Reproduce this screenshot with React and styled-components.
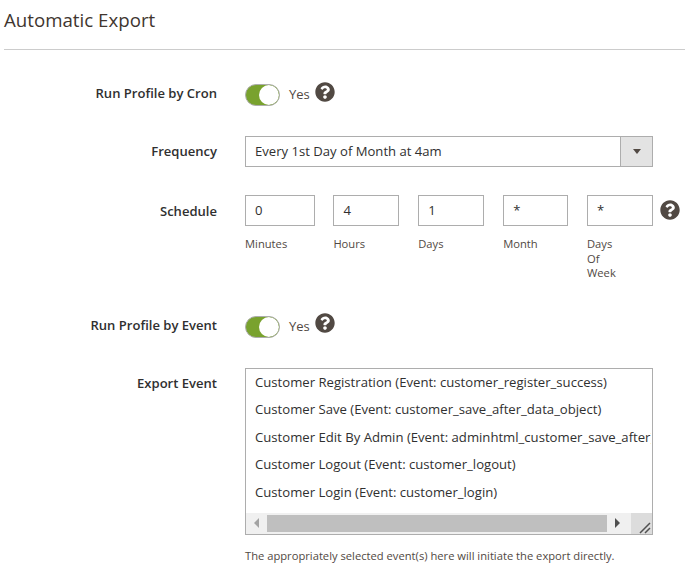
import React from "react";
import styled, { createGlobalStyle } from "styled-components";
import { FaQuestionCircle } from "react-icons/fa";

const GlobalStyle = createGlobalStyle`
  html, body {
    margin: 0;
    padding: 0;
    background: #fff;
    overflow: hidden;
  }
  body {
    font-family: "Open Sans", "Liberation Sans", sans-serif;
    color: #303030;
    font-size: 13px;
  }
`;

const Page = styled.div`
  width: 685px;
  height: 574px;
  padding-left: 4px;
  box-sizing: border-box;
  overflow: hidden;
`;

const Title = styled.h2`
  margin: 0;
  height: 50px;
  padding-top: 7px;
  box-sizing: border-box;
  font-size: 18.7px;
  line-height: 25px;
  font-weight: 400;
  color: #41362f;
  border-bottom: 1px solid #cccccc;
`;

const Form = styled.div`
  display: flex;
  flex-direction: column;
  padding-top: 34px;
`;

const Row = styled.div`
  display: grid;
  grid-template-columns: 213px 1fr;
  column-gap: 28px;
  margin-bottom: ${(p) => p.$gap || 0}px;
`;

const Label = styled.div`
  text-align: right;
  font-weight: 600;
  font-size: 13.05px;
  line-height: 18px;
  padding-top: ${(p) => p.$top || 0}px;
  color: #303030;
`;

const Control = styled.div`
  display: flex;
  align-items: ${(p) => p.$align || "center"};
  min-width: 0;
`;

const Toggle = styled.div`
  position: relative;
  width: 35px;
  height: 22px;
  border-radius: 11px;
  background: #79a22e;
  border: 1px solid #adadad;
  box-sizing: border-box;
  overflow: hidden;
`;

const Knob = styled.span`
  position: absolute;
  top: 0;
  right: 0;
  width: 20px;
  height: 20px;
  border-radius: 50%;
  background: #fff;
`;

const ToggleText = styled.span`
  margin-left: 9px;
  margin-top: -2px;
  font-size: 13px;
  line-height: 18px;
  color: #514943;
`;

const Help = styled(FaQuestionCircle)`
  width: 20px;
  height: 20px;
  color: #514943;
  flex: none;
  margin-left: ${(p) => p.$left}px;
  margin-top: ${(p) => p.$top || 0}px;
`;

const Select = styled.div`
  width: 408px;
  height: 31px;
  box-sizing: border-box;
  border: 1px solid #adadad;
  display: flex;
  align-items: center;
  justify-content: space-between;
  padding-left: 9px;
`;

const SelectValue = styled.span`
  margin-top: -2px;
  font-size: 13.1px;
  color: #303030;
`;

const SelectButton = styled.div`
  width: 31px;
  height: 29px;
  background: #e3e3e3;
  border-left: 1px solid #adadad;
  display: flex;
  align-items: center;
  justify-content: center;
`;

const Caret = styled.span`
  width: 0;
  height: 0;
  border-left: 4px solid transparent;
  border-right: 4px solid transparent;
  border-top: 5px solid #514943;
`;

const Fields = styled.div`
  display: flex;
  width: 408px;
  justify-content: space-between;
  flex: none;
`;

const Field = styled.div`
  width: ${(p) => p.$w}px;
  display: flex;
  flex-direction: column;
`;

const FieldBox = styled.div`
  height: 31px;
  box-sizing: border-box;
  border: 1px solid #adadad;
  padding-left: 9px;
  font-size: 13.1px;
  line-height: 29px;
  color: #303030;
`;

const FieldHint = styled.div`
  margin-top: 11px;
  max-width: 40px;
  font-size: 11.2px;
  line-height: 14.5px;
  color: #514943;
`;

const ListBox = styled.div`
  position: relative;
  width: 408px;
  height: 167px;
  box-sizing: border-box;
  border: 1px solid #adadad;
  overflow: hidden;
`;

const Options = styled.div`
  width: 405px;
  height: 144px;
  padding-top: 0.4px;
  box-sizing: border-box;
  overflow: hidden;
`;

const Option = styled.div`
  height: 27.5px;
  padding-left: 9px;
  font-size: 13.13px;
  line-height: 27.5px;
  white-space: nowrap;
  color: #303030;
`;

const ScrollBar = styled.div`
  position: absolute;
  left: 0;
  right: 0;
  bottom: 0;
  height: 21px;
  display: flex;
  background: #f0f0f0;
`;

const ScrollButton = styled.div`
  width: 21px;
  display: flex;
  align-items: center;
  justify-content: center;
  flex: none;
`;

const Arrow = styled.span`
  width: 0;
  height: 0;
  border-top: 5px solid transparent;
  border-bottom: 5px solid transparent;
  ${(p) =>
    p.$dir === "left"
      ? "border-right: 5px solid #a3a3a3;"
      : "border-left: 5px solid #505050;"}
`;

const Thumb = styled.div`
  width: 340px;
  height: 17px;
  margin-top: 2px;
  background: #bfbfbf;
  flex: none;
`;

const Corner = styled.div`
  margin-left: auto;
  width: 21px;
  background: #dcdcdc;
  display: flex;
  align-items: flex-end;
  justify-content: flex-end;
`;

const Note = styled.div`
  margin-top: 13px;
  font-size: 11.2px;
  line-height: 15px;
  white-space: nowrap;
  color: #514943;
`;

const options = [
  "Customer Registration (Event: customer_register_success)",
  "Customer Save (Event: customer_save_after_data_object)",
  "Customer Edit By Admin (Event: adminhtml_customer_save_after)",
  "Customer Logout (Event: customer_logout)",
  "Customer Login (Event: customer_login)",
];

const schedule = [
  { value: "0", hint: "Minutes", w: 69.5 },
  { value: "4", hint: "Hours", w: 66 },
  { value: "1", hint: "Days", w: 66 },
  { value: "*", hint: "Month", w: 65 },
  { value: "*", hint: "Days Of Week", w: 66 },
];

const Switch = () => (
  <>
    <Toggle>
      <Knob />
    </Toggle>
    <ToggleText>Yes</ToggleText>
    <Help $left={5} $top={-7} />
  </>
);

export default function App() {
  return (
    <Page>
      <GlobalStyle />
      <Title>Automatic Export</Title>
      <Form>
        <Row $gap={30}>
          <Label>Run Profile by Cron</Label>
          <Control>
            <Switch />
          </Control>
        </Row>
        <Row $gap={28}>
          <Label $top={6}>Frequency</Label>
          <Control>
            <Select>
              <SelectValue>Every 1st Day of Month at 4am</SelectValue>
              <SelectButton>
                <Caret />
              </SelectButton>
            </Select>
          </Control>
        </Row>
        <Row $gap={35}>
          <Label $top={7}>Schedule</Label>
          <Control $align="flex-start">
            <Fields>
              {schedule.map((f) => (
                <Field key={f.hint} $w={f.w}>
                  <FieldBox>{f.value}</FieldBox>
                  <FieldHint>{f.hint}</FieldHint>
                </Field>
              ))}
            </Fields>
            <Help $left={7} $top={5} />
          </Control>
        </Row>
        <Row $gap={30}>
          <Label>Run Profile by Event</Label>
          <Control>
            <Switch />
          </Control>
        </Row>
        <Row>
          <Label $top={6}>Export Event</Label>
          <Control $align="flex-start">
            <div>
              <ListBox>
                <Options>
                  {options.map((o) => (
                    <Option key={o}>{o}</Option>
                  ))}
                </Options>
                <ScrollBar>
                  <ScrollButton>
                    <Arrow $dir="left" />
                  </ScrollButton>
                  <Thumb />
                  <ScrollButton>
                    <Arrow $dir="right" />
                  </ScrollButton>
                  <Corner>
                    <svg width="14" height="14" viewBox="0 0 14 14">
                      <path d="M2 13 L12 3 M7 13 L12 8" stroke="#505050" strokeWidth="1.5" fill="none" />
                    </svg>
                  </Corner>
                </ScrollBar>
              </ListBox>
              <Note>The appropriately selected event(s) here will initiate the export directly.</Note>
            </div>
          </Control>
        </Row>
      </Form>
    </Page>
  );
}
